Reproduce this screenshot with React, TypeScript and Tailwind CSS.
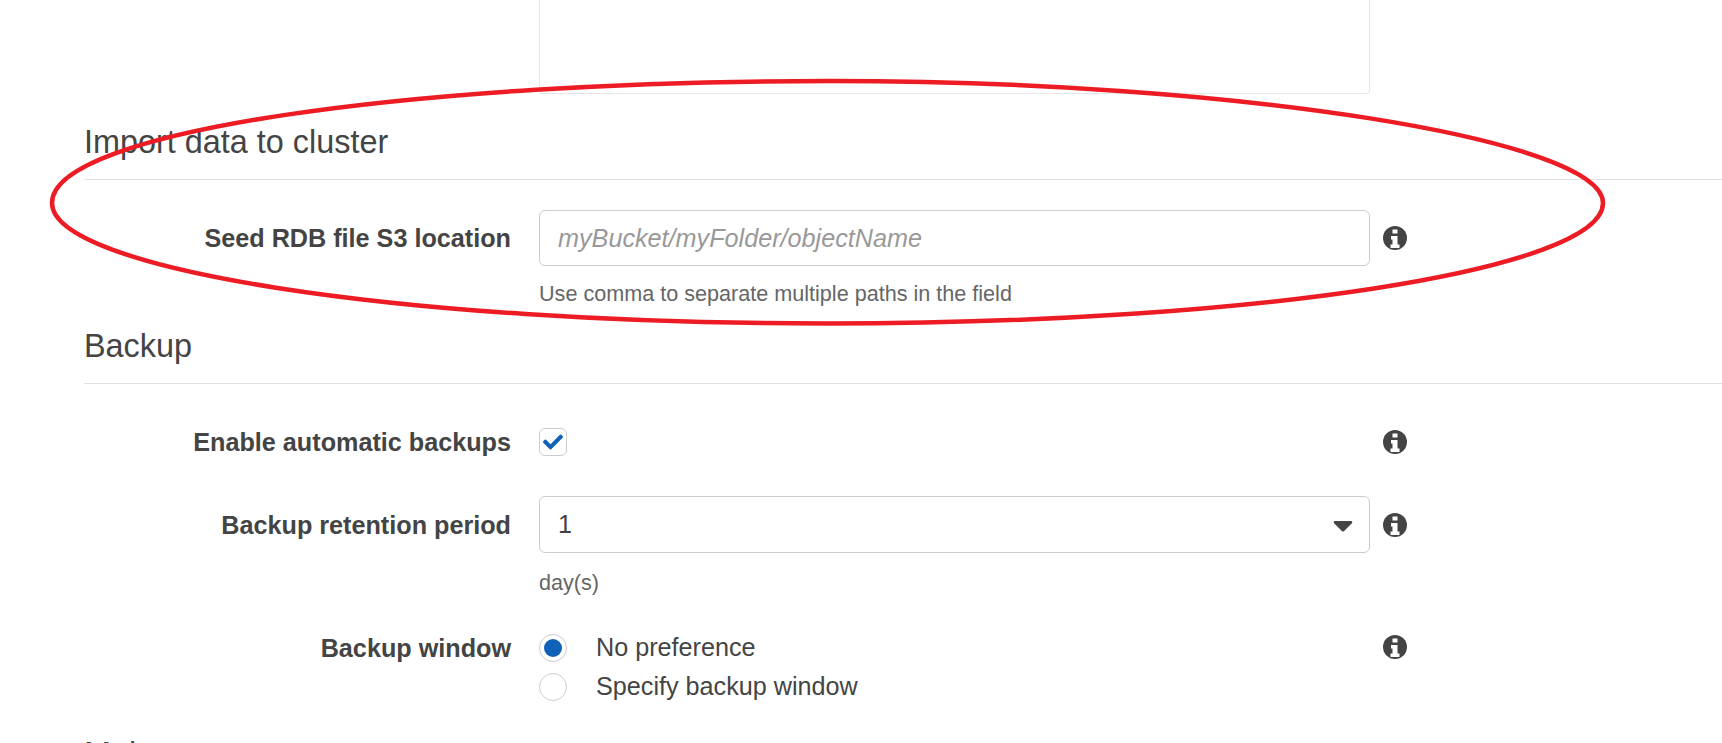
import React from 'react';
import { FaCaretDown, FaCheck } from 'react-icons/fa';

// old FontAwesome style info circle, the "i" nearly fills the disc
const Info = () => (
  <svg viewBox="0 0 24 24" className="w-6 h-6 shrink-0">
    <circle cx="12" cy="12" r="12" fill="#444" />
    <path fill="#fff" d="M9.5 3.5h5v4h-5zM8 10h6.5v8.5h2V22h-9v-3.5h2V13.5H8z" />
  </svg>
);

const SectionTitle = ({ title }: { title: string }) => (
  <h2 className="text-[32.4px] leading-[37px] text-[#444] border-b border-[#e1e1e1] pb-[18px]">{title}</h2>
);

const Label = ({ children }: { children: React.ReactNode }) => (
  <label className="w-[427px] shrink-0 text-right font-bold text-[25.2px] leading-7 text-[#444]">{children}</label>
);

const App = () => {
  return (
    <div className="relative h-[743px] overflow-hidden bg-white font-['Liberation_Sans',Arial,sans-serif]">
      {/* panel above, cut off by the top of the window */}
      <div className="ml-[539px] w-[831px] h-[94px] border-x border-b border-[#e6e6e6] rounded-b" />

      <div className="pl-[84px] pt-[30px]">
        <SectionTitle title="Import data to cluster" />

        <div className="flex items-center gap-7 mt-[30px]">
          <Label>Seed RDB file S3 location</Label>
          <div className="flex items-center gap-[13px]">
            <input
              placeholder="myBucket/myFolder/objectName"
              className="w-[831px] h-14 px-[18px] border border-[#ccc] rounded-md text-[25.2px] placeholder:italic placeholder:text-[#999] outline-none"
            />
            <Info />
          </div>
        </div>
        <p className="ml-[455px] mt-[16px] text-[21.6px] leading-[23px] text-[#666]">Use comma to separate multiple paths in the field</p>

        <div className="mt-[23px]">
          <SectionTitle title="Backup" />
        </div>

        <div className="flex items-center gap-7 mt-[44px]">
          <Label>Enable automatic backups</Label>
          <div className="flex items-center justify-between w-[868px]">
            <span className="flex items-center justify-center w-7 h-7 border border-[#ccc] rounded-md">
              <FaCheck className="w-5 h-5 text-[#0f62b8]" />
            </span>
            <Info />
          </div>
        </div>

        <div className="flex items-center gap-7 mt-[40px]">
          <Label>Backup retention period</Label>
          <div className="flex items-center gap-[13px]">
            <div className="flex items-center justify-between w-[831px] h-[57px] pl-[18px] pr-[10px] border border-[#ccc] rounded-md text-[25.2px] text-[#444]">
              <span>1</span>
              <FaCaretDown className="w-8 h-8 text-[#444]" />
            </div>
            <Info />
          </div>
        </div>
        <p className="ml-[455px] mt-[18px] text-[21.6px] leading-[23px] text-[#666]">day(s)</p>

        <div className="flex gap-7 mt-[39px]">
          <div className="flex items-center h-[30px]">
            <Label>Backup window</Label>
          </div>
          <div className="flex justify-between w-[868px]">
            <div className="flex flex-col gap-2.5">
              <div className="flex items-center gap-[29px] h-[29px] text-[25.2px] text-[#444]">
                <span className="flex items-center justify-center w-7 h-7 border border-[#ccc] rounded-full">
                  <span className="w-[18px] h-[18px] rounded-full bg-[#0f62b8]" />
                </span>
                No preference
              </div>
              <div className="flex items-center gap-[29px] h-[29px] text-[25.2px] text-[#444]">
                <span className="w-7 h-7 border border-[#ccc] rounded-full" />
                Specify backup window
              </div>
            </div>
            <div className="pt-0.5">
              <Info />
            </div>
          </div>
        </div>

        <div className="mt-[35px]">
          <SectionTitle title="Maintenance" />
        </div>
      </div>

      {/* red annotation drawn over the page, hand drawn so the upper left bulges a bit */}
      <svg className="absolute inset-0 w-full h-full pointer-events-none" viewBox="0 0 1722 743">
        <path
          d="M52 203C52 130 420 81 830 81C1240 81 1603 140 1603 203C1603 269.5 1255 323.5 827 323.5C399 323.5 52 269.5 52 203Z"
          fill="none"
          stroke="#ed1c24"
          strokeWidth="4.5"
        />
      </svg>
    </div>
  );
};

export default App;
